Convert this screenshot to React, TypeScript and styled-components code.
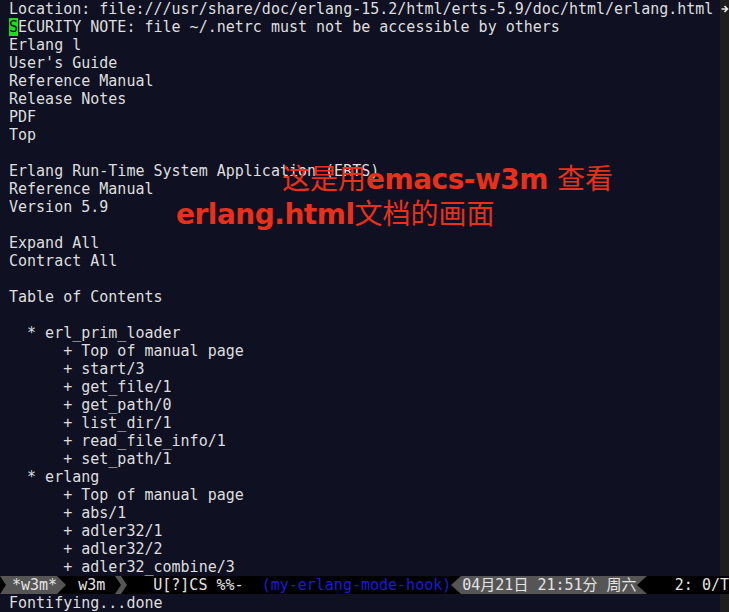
import styled, { createGlobalStyle } from "styled-components";

const GlobalStyle = createGlobalStyle`
  html, body {
    margin: 0;
    padding: 0;
    background: #0f1122;
  }
`;

const MONO = `"DejaVu Sans Mono", "Noto Sans CJK SC", monospace`;
const GREY = "#555555";
const BLACK = "#000000";

const Frame = styled.div`
  width: 729px;
  height: 612px;
  display: flex;
  flex-direction: column;
  background: #0f1122;
  font-family: ${MONO};
  font-size: 15px;
  line-height: 18px;
  color: #dedede;
  overflow: hidden;
`;

const Window = styled.div`
  display: flex;
  height: 576px;
`;

const LeftFringe = styled.div`
  width: 9px;
  flex-shrink: 0;
`;

const RightFringe = styled.div`
  width: 9px;
  flex-shrink: 0;
  background: #1e1e1f;
  display: flex;
  flex-direction: column;
`;

const FringeMark = styled.div`
  height: 18px;
  display: flex;
  align-items: center;
`;

const Buffer = styled.div`
  position: relative;
  flex: 1;
  overflow: hidden;
`;

const Row = styled.div`
  height: 18px;
  white-space: pre;
`;

const Cursor = styled.span`
  background: #1fdc1f;
  color: #0f1122;
`;

const Caption = styled.div<{ $top: number; $left: number }>`
  position: absolute;
  top: ${(p) => p.$top}px;
  left: ${(p) => p.$left}px;
  font-family: "DejaVu Sans", "Noto Sans CJK SC", sans-serif;
  font-size: 28px;
  line-height: 34px;
  color: #e8301a;
  white-space: pre;
`;

const Latin = styled.span`
  font-weight: bold;
  letter-spacing: -0.5px;
`;

const ModeLine = styled.div`
  height: 18px;
  display: flex;
  background: ${BLACK};
  white-space: pre;
  flex-shrink: 0;
`;

const Segment = styled.div<{ $bg: string; $pl?: number; $pr?: number }>`
  display: flex;
  background: ${(p) => p.$bg};
  padding-left: ${(p) => p.$pl ?? 0}px;
  padding-right: ${(p) => p.$pr ?? 0}px;
  color: #e4e4e4;
`;

const Filler = styled.div`
  flex: 1;
  text-align: right;
  overflow: hidden;
  color: #e4e4e4;
`;

const Hook = styled.span`
  color: #1b1bdc;
`;

const Echo = styled.div`
  height: 18px;
  display: flex;
  flex-shrink: 0;
`;

const EchoText = styled.div`
  flex: 1;
  white-space: pre;
`;

const Arrow = ({
  w,
  bg,
  fg,
  dir,
}: {
  w: number;
  bg: string;
  fg: string;
  dir: "left" | "right";
}) => (
  <svg width={w} height={18} style={{ display: "block", flexShrink: 0 }}>
    <rect width={w} height={18} fill={bg} />
    <polygon
      points={dir === "right" ? `0,0 ${w},9 0,18` : `${w},0 0,9 ${w},18`}
      fill={fg}
    />
  </svg>
);

const lines = [
  "Location: file:///usr/share/doc/erlang-15.2/html/erts-5.9/doc/html/erlang.html",
  "SECURITY NOTE: file ~/.netrc must not be accessible by others",
  "Erlang l",
  "User's Guide",
  "Reference Manual",
  "Release Notes",
  "PDF",
  "Top",
  "",
  "Erlang Run-Time System Application (ERTS)",
  "Reference Manual",
  "Version 5.9",
  "",
  "Expand All",
  "Contract All",
  "",
  "Table of Contents",
  "",
  "  * erl_prim_loader",
  "      + Top of manual page",
  "      + start/3",
  "      + get_file/1",
  "      + get_path/0",
  "      + list_dir/1",
  "      + read_file_info/1",
  "      + set_path/1",
  "  * erlang",
  "      + Top of manual page",
  "      + abs/1",
  "      + adler32/1",
  "      + adler32/2",
  "      + adler32_combine/3",
];

export default function App() {
  return (
    <>
      <GlobalStyle />
      <Frame>
        <Window>
          <LeftFringe />
          <Buffer>
            {lines.map((line, i) =>
              i === 1 ? (
                <Row key={i}>
                  <Cursor>S</Cursor>
                  {line.slice(1)}
                </Row>
              ) : (
                <Row key={i}>{line}</Row>
              )
            )}
            <Caption $top={163} $left={273}>
              这是用<Latin>emacs-w3m</Latin> 查看
            </Caption>
            <Caption $top={198} $left={167}>
              <Latin>erlang.html</Latin>文档的画面
            </Caption>
          </Buffer>
          <RightFringe>
            <FringeMark>
              <svg width={9} height={18}>
                <path
                  d="M1.5 9 H7 M4.5 6 L7.5 9 L4.5 12"
                  stroke="#e8e8e8"
                  strokeWidth={1.6}
                  fill="none"
                />
              </svg>
            </FringeMark>
          </RightFringe>
        </Window>
        <ModeLine>
          <Arrow w={6} bg={GREY} fg={BLACK} dir="right" />
          <Segment $bg={GREY} $pl={6}>*w3m*</Segment>
          <Arrow w={9} bg={BLACK} fg={GREY} dir="right" />
          <Segment $bg={BLACK} $pl={12} $pr={10}>w3m</Segment>
          <Arrow w={6} bg={GREY} fg={BLACK} dir="right" />
          <Arrow w={6} bg={BLACK} fg={GREY} dir="right" />
          <Segment $bg={BLACK} $pl={26}>
            {"U[?]CS %%-  "}
            <Hook>(my-erlang-mode-hook)</Hook>
          </Segment>
          <Arrow w={10} bg={BLACK} fg={GREY} dir="left" />
          <Segment $bg={GREY} $pl={1}>04月21日 21:51分 周六</Segment>
          <Arrow w={10} bg={GREY} fg={BLACK} dir="left" />
          <Filler>{"  2: 0/T"}</Filler>
        </ModeLine>
        <Echo>
          <LeftFringe />
          <EchoText>Fontifying...done</EchoText>
          <RightFringe />
        </Echo>
      </Frame>
    </>
  );
}
